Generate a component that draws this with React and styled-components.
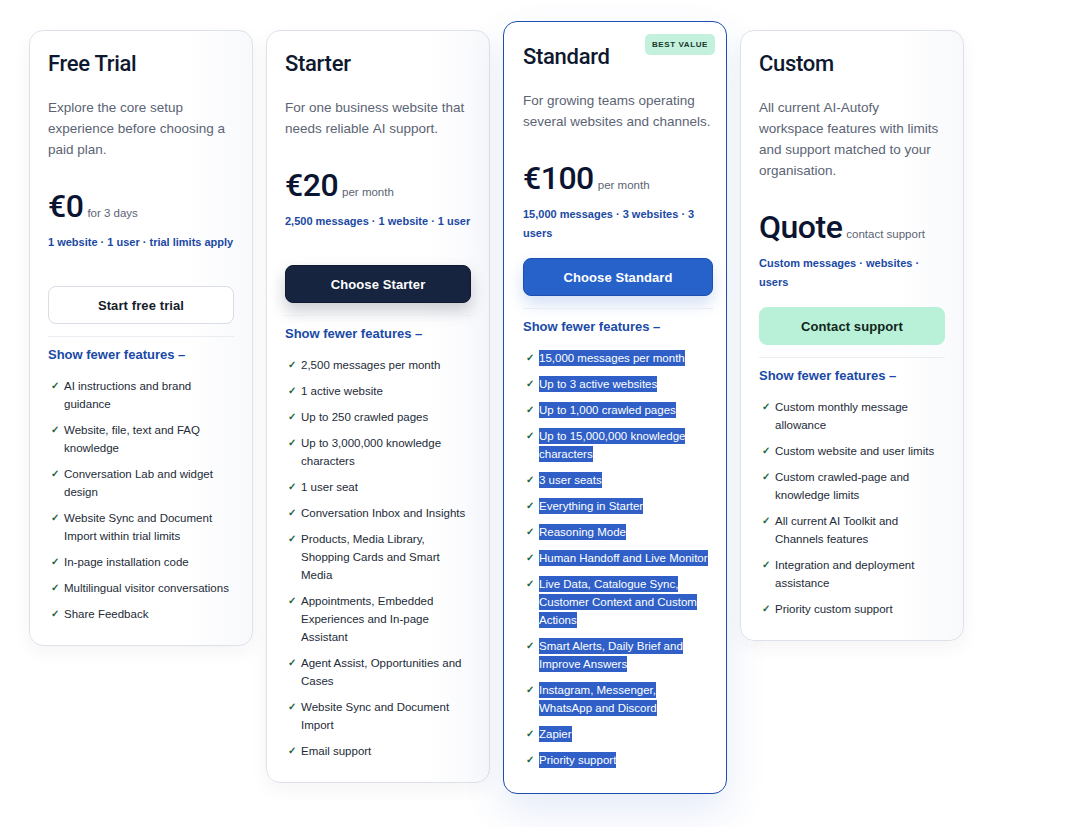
import React from 'react';
import styled, { createGlobalStyle, css } from 'styled-components';

const GlobalStyle = createGlobalStyle`
  body {
    margin: 0;
    background: #ffffff;
    font-family: "Liberation Sans", Arial, sans-serif;
    -webkit-font-smoothing: antialiased;
  }
`;

const plans = [
  {
    name: 'Free Trial',
    description: 'Explore the core setup experience before choosing a paid plan.',
    price: '€0',
    period: 'for 3 days',
    meta: '1 website · 1 user · trial limits apply',
    cta: 'Start free trial',
    variant: 'outline',
    features: [
      'AI instructions and brand guidance',
      'Website, file, text and FAQ knowledge',
      'Conversation Lab and widget design',
      'Website Sync and Document Import within trial limits',
      'In-page installation code',
      'Multilingual visitor conversations',
      'Share Feedback',
    ],
  },
  {
    name: 'Starter',
    description: 'For one business website that needs reliable AI support.',
    price: '€20',
    period: 'per month',
    meta: '2,500 messages · 1 website · 1 user',
    cta: 'Choose Starter',
    variant: 'dark',
    features: [
      '2,500 messages per month',
      '1 active website',
      'Up to 250 crawled pages',
      'Up to 3,000,000 knowledge characters',
      '1 user seat',
      'Conversation Inbox and Insights',
      'Products, Media Library, Shopping Cards and Smart Media',
      'Appointments, Embedded Experiences and In-page Assistant',
      'Agent Assist, Opportunities and Cases',
      'Website Sync and Document Import',
      'Email support',
    ],
  },
  {
    name: 'Standard',
    description: 'For growing teams operating several websites and channels.',
    price: '€100',
    period: 'per month',
    meta: '15,000 messages · 3 websites · 3 users',
    cta: 'Choose Standard',
    variant: 'primary',
    featured: true,
    badge: 'Best value',
    features: [
      '15,000 messages per month',
      'Up to 3 active websites',
      'Up to 1,000 crawled pages',
      'Up to 15,000,000 knowledge characters',
      '3 user seats',
      'Everything in Starter',
      'Reasoning Mode',
      'Human Handoff and Live Monitor',
      'Live Data, Catalogue Sync, Customer Context and Custom Actions',
      'Smart Alerts, Daily Brief and Improve Answers',
      'Instagram, Messenger, WhatsApp and Discord',
      'Zapier',
      'Priority support',
    ],
  },
  {
    name: 'Custom',
    description: 'All current AI-Autofy workspace features with limits and support matched to your organisation.',
    price: 'Quote',
    period: 'contact support',
    meta: 'Custom messages · websites · users',
    cta: 'Contact support',
    variant: 'mint',
    features: [
      'Custom monthly message allowance',
      'Custom website and user limits',
      'Custom crawled-page and knowledge limits',
      'All current AI Toolkit and Channels features',
      'Integration and deployment assistance',
      'Priority custom support',
    ],
  },
];

const Page = styled.main`
  display: flex;
  align-items: flex-start;
  gap: 13px;
  padding: 30px 0 40px 29px;
`;

const Card = styled.section`
  position: relative;
  box-sizing: border-box;
  width: 224px;
  flex: none;
  padding: 20px 18px 22px;
  border: 1px solid #dde2ea;
  border-radius: 14px;
  background: linear-gradient(90deg, #ffffff 0%, #ffffff 70%, #f8f9fc 100%);
  box-shadow: 0 6px 18px rgba(30, 45, 80, 0.05);

  ${({ $featured }) =>
    $featured &&
    css`
      padding: 22px 13px 24px 19px;
      border: 1.5px solid #1f4eae;
      background: #ffffff;
      transform: translateY(-9px);
      box-shadow: 0 18px 40px rgba(40, 90, 200, 0.12);
    `}
`;

const Badge = styled.span`
  position: absolute;
  top: 12px;
  right: 11px;
  padding: 5px 7px;
  border-radius: 5px;
  background: #c4f1dd;
  color: #17382b;
  font-size: 8px;
  font-weight: 700;
  letter-spacing: 0.6px;
  line-height: 11px;
  text-transform: uppercase;
`;

const Title = styled.h2`
  margin: 0 0 20px;
  color: #0e1930;
  font-family: Roboto, "Liberation Sans", sans-serif;
  font-size: 22px;
  font-weight: 500;
  line-height: 26px;
  letter-spacing: -0.3px;
`;

const Description = styled.p`
  margin: 0;
  color: #5b6474;
  font-size: 13.5px;
  line-height: 21px;
  font-kerning: none;
`;

const PriceRow = styled.div`
  display: flex;
  align-items: baseline;
  gap: 4px;
  height: 36px;
  margin-top: 28px;
`;

const Amount = styled.span`
  color: #0b1430;
  font-family: Roboto, "Liberation Sans", sans-serif;
  font-size: 32px;
  font-weight: 500;
  line-height: 36px;
  letter-spacing: -0.5px;
`;

const Period = styled.span`
  color: #5b6474;
  font-size: 11.5px;
  line-height: 1;
`;

const Meta = styled.p`
  min-height: 38px;
  margin: 9px 0 15px;
  color: #1a49a3;
  font-size: 11px;
  font-weight: 700;
  line-height: 19px;
`;

const buttonVariants = {
  outline: css`
    background: #ffffff;
    color: #151d2c;
    border-color: #d8dde6;
  `,
  dark: css`
    background: #16243f;
    color: #ffffff;
    border-color: #0f1a30;
    box-shadow: 0 8px 16px rgba(15, 25, 50, 0.22);
  `,
  primary: css`
    background: #2762cb;
    color: #ffffff;
    border-color: #1d4fae;
    box-shadow: 0 8px 16px rgba(39, 98, 203, 0.2);
  `,
  mint: css`
    background: #b9f0d8;
    color: #10261c;
    border-color: #b9f0d8;
  `,
};

const Button = styled.button`
  display: block;
  box-sizing: border-box;
  width: 100%;
  height: 38px;
  border: 1px solid transparent;
  border-radius: 8px;
  font-family: inherit;
  font-size: 13px;
  font-weight: 700;
  letter-spacing: 0.1px;
  cursor: pointer;
  ${({ $variant }) => buttonVariants[$variant]}
`;

const Divider = styled.hr`
  margin: 12px 0 0;
  border: 0;
  border-top: 1px solid #e9ecf1;
`;

const Toggle = styled.button`
  display: block;
  padding: 9px 0 0;
  border: 0;
  background: none;
  color: #1a4aa6;
  font-family: inherit;
  font-size: 13px;
  font-weight: 700;
  line-height: 18px;
  cursor: pointer;
`;

const FeatureList = styled.ul`
  display: flex;
  flex-direction: column;
  gap: 8px;
  margin: 13px 0 0;
  padding: 0 ${({ $featured }) => ($featured ? '3px' : '0')} 0 0;
  list-style: none;
`;

const Feature = styled.li`
  display: flex;
  color: #232b38;
  font-size: 11.5px;
  line-height: 18px;
`;

const Check = styled.span`
  flex: none;
  width: 13px;
  padding-left: 3px;
  color: #1d6440;
  font-size: 10px;
  font-weight: 700;
`;

const Label = styled.span`
  ${({ $selected }) =>
    $selected &&
    css`
      padding: 2px 0;
      background: #2f5fc7;
      color: #ffffff;
      -webkit-box-decoration-break: clone;
      box-decoration-break: clone;
    `}
`;

const PlanCard = ({ plan }) => (
  <Card $featured={plan.featured}>
    {plan.badge && <Badge>{plan.badge}</Badge>}
    <Title>{plan.name}</Title>
    <Description>{plan.description}</Description>
    <PriceRow>
      <Amount>{plan.price}</Amount>
      <Period>{plan.period}</Period>
    </PriceRow>
    <Meta>{plan.meta}</Meta>
    <Button $variant={plan.variant}>{plan.cta}</Button>
    <Divider />
    <Toggle>Show fewer features –</Toggle>
    <FeatureList $featured={plan.featured}>
      {plan.features.map(feature => (
        <Feature key={feature}>
          <Check>✓</Check>
          <div>
            <Label $selected={plan.featured}>{feature}</Label>
          </div>
        </Feature>
      ))}
    </FeatureList>
  </Card>
);

const App = () => (
  <>
    <GlobalStyle />
    <Page>
      {plans.map(plan => (
        <PlanCard key={plan.name} plan={plan} />
      ))}
    </Page>
  </>
);

export default App;
